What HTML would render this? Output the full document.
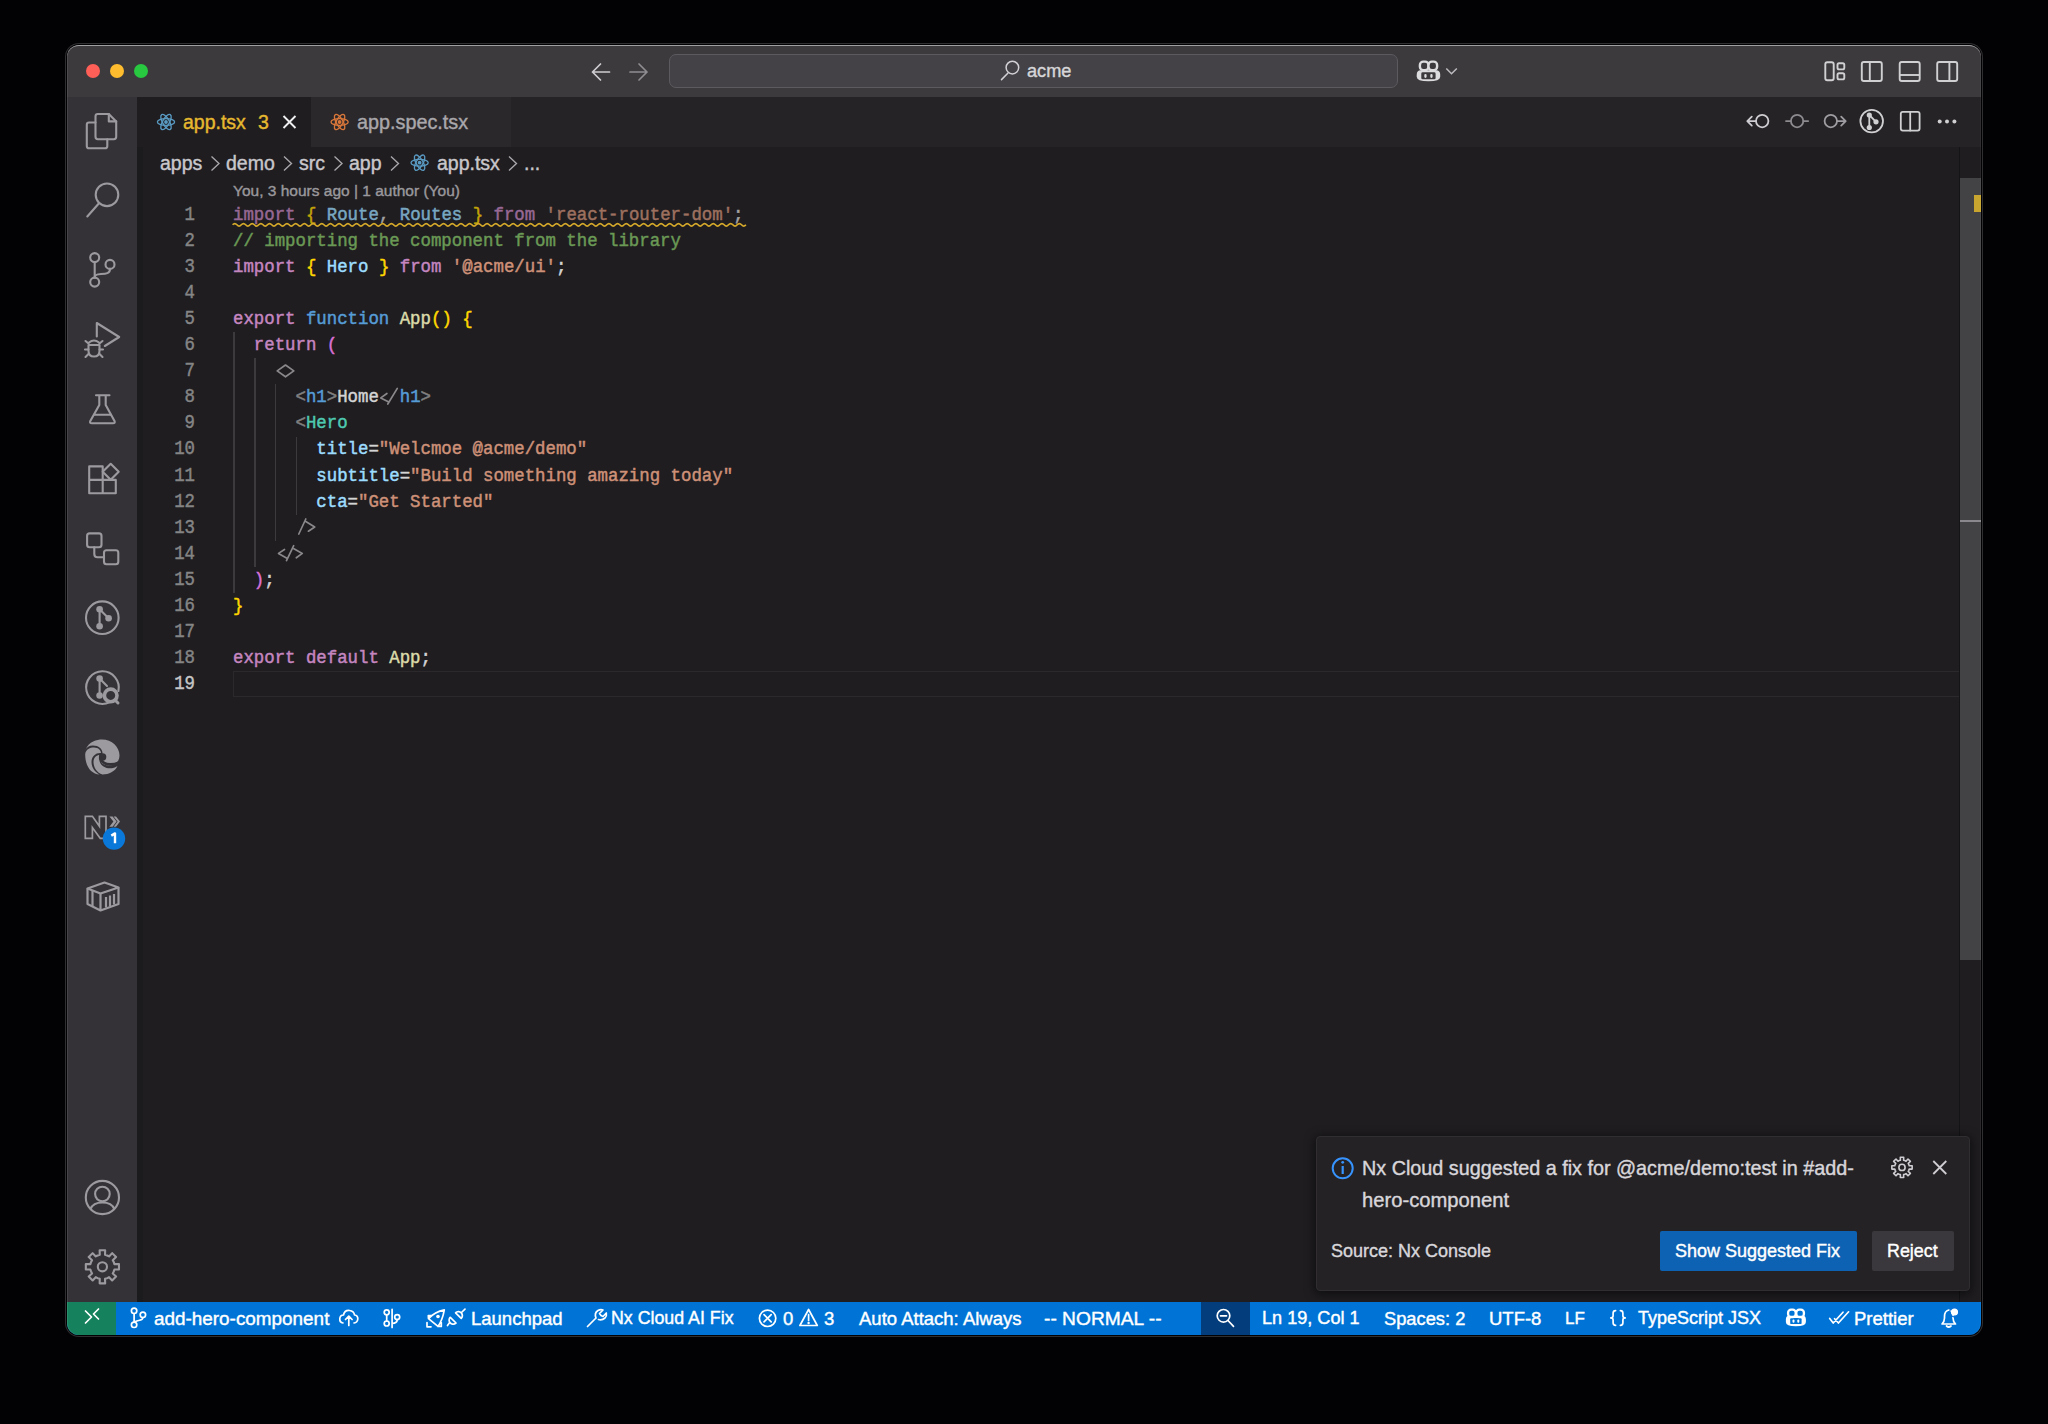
<!DOCTYPE html>
<html><head><meta charset="utf-8">
<style>
*{margin:0;padding:0;box-sizing:border-box}
html,body{width:2048px;height:1424px;background:#020104;overflow:hidden;font-family:"Liberation Sans",sans-serif;position:relative;-webkit-font-smoothing:antialiased}
.abs{position:absolute}
.t{position:absolute;white-space:pre;line-height:30px;height:30px;-webkit-text-stroke:0.4px currentColor}
#frame{position:absolute;left:67px;top:45px;width:1914px;height:1290px;border-radius:12px;background:#1f1d20;box-shadow:0 0 0 1px #020104,0 0 0 2px #2f2e31}
#title{position:absolute;left:67px;top:45px;width:1914px;height:52px;background:#3c3a3d;border-radius:12px 12px 0 0;border-top:1.5px solid #a09fa2}
.dot{position:absolute;width:14px;height:14px;border-radius:50%;top:64px}
#act{position:absolute;left:67px;top:97px;width:70px;height:1205px;background:#343236}
#tabs{position:absolute;left:137px;top:97px;width:1844px;height:50px;background:#252326}
#status{position:absolute;left:67px;top:1302px;width:1914px;height:33px;background:#0074d6;border-radius:0 0 12px 12px;overflow:hidden}
.ln{position:absolute;left:140px;width:55px;text-align:right;font-family:"Liberation Mono",monospace;font-size:17.38px;line-height:26.11px;height:26.11px;-webkit-text-stroke:0.4px currentColor;transform:translateY(0.8px) scaleY(1.14);transform-origin:0 18px}
.cl{position:absolute;left:233px;white-space:pre;font-family:"Liberation Mono",monospace;font-size:17.38px;line-height:26.11px;height:26.11px;color:#d4d4d4;-webkit-text-stroke:0.45px currentColor;transform:translateY(0.7px) scaleY(1.1);transform-origin:0 18px}
.dim{opacity:.72}
.st{position:absolute;top:1302px;line-height:33px;height:33px;color:#fff;font-size:18.5px;white-space:pre;-webkit-text-stroke:0.4px currentColor}
svg.ov{position:absolute;left:0;top:0;width:2048px;height:1424px}
</style></head><body>
<div id="frame"></div>
<div id="title"></div>
<div class="dot" style="left:86px;background:#ff5f57"></div>
<div class="dot" style="left:110px;background:#febc2e"></div>
<div class="dot" style="left:134px;background:#28c840"></div>
<!-- command center -->
<div class="abs" style="left:669px;top:54px;width:729px;height:34px;border-radius:7px;background:#444246;border:1px solid #5c5a5e"></div>
<div class="t" style="left:1027px;top:56px;color:#d6d5d8;font-size:18.2px">acme</div>

<div id="act"></div>
<div class="abs" style="left:137px;top:147px;width:6px;height:1155px;background:#1b1a1c"></div>
<div id="tabs"></div>
<div class="abs" style="left:137px;top:97px;width:174px;height:50px;background:#1f1d20"></div>
<div class="abs" style="left:311px;top:97px;width:200px;height:50px;background:#2a282b"></div>
<div class="t" style="left:183px;top:107px;color:#e5b82f;font-size:19.5px">app.tsx</div>
<div class="t" style="left:258px;top:107px;color:#e5b82f;font-size:19.5px">3</div>
<div class="t" style="left:357px;top:107px;color:#a9a7ab;font-size:19.8px">app.spec.tsx</div>

<!-- breadcrumbs -->
<div class="t" style="left:160px;top:148px;color:#c9c7cb;font-size:19.5px">apps</div>
<div class="t" style="left:226px;top:148px;color:#c9c7cb;font-size:19.5px">demo</div>
<div class="t" style="left:299px;top:148px;color:#c9c7cb;font-size:19.5px">src</div>
<div class="t" style="left:349px;top:148px;color:#c9c7cb;font-size:19.5px">app</div>
<div class="t" style="left:437px;top:148px;color:#c9c7cb;font-size:19.5px">app.tsx</div>
<div class="t" style="left:524px;top:148px;color:#c9c7cb;font-size:19.5px">...</div>
<div class="t" style="left:233px;top:176px;color:#9a989c;font-size:15.5px">You, 3 hours ago | 1 author (You)</div>

<div class="ln" style="top:201.50px;color:#858585">1</div>
<div class="cl dim" style="top:201.50px"><span style="color:#c586c0">import</span><span> </span><span style="color:#ffd700">{</span><span> </span><span style="color:#9cdcfe">Route</span><span>,</span><span> </span><span style="color:#9cdcfe">Routes</span><span> </span><span style="color:#ffd700">}</span><span> </span><span style="color:#c586c0">from</span><span> </span><span style="color:#ce9178">'react-router-dom'</span><span>;</span></div>
<div class="ln" style="top:227.61px;color:#858585">2</div>
<div class="cl" style="top:227.61px"><span style="color:#6a9955">// importing the component from the library</span></div>
<div class="ln" style="top:253.72px;color:#858585">3</div>
<div class="cl" style="top:253.72px"><span style="color:#c586c0">import</span><span> </span><span style="color:#ffd700">{</span><span> </span><span style="color:#9cdcfe">Hero</span><span> </span><span style="color:#ffd700">}</span><span> </span><span style="color:#c586c0">from</span><span> </span><span style="color:#ce9178">'@acme/ui'</span><span>;</span></div>
<div class="ln" style="top:279.83px;color:#858585">4</div>
<div class="ln" style="top:305.94px;color:#858585">5</div>
<div class="cl" style="top:305.94px"><span style="color:#c586c0">export</span><span> </span><span style="color:#569cd6">function</span><span> </span><span style="color:#dcdcaa">App</span><span style="color:#ffd700">()</span><span> </span><span style="color:#ffd700">{</span></div>
<div class="ln" style="top:332.05px;color:#858585">6</div>
<div class="cl" style="top:332.05px"><span>  </span><span style="color:#c586c0">return</span><span> </span><span style="color:#da70d6">(</span></div>
<div class="ln" style="top:358.16px;color:#858585">7</div>
<div class="ln" style="top:384.27px;color:#858585">8</div>
<div class="cl" style="top:384.27px"><span>      </span><span style="color:#808080">&lt;</span><span style="color:#569cd6">h1</span><span style="color:#808080">&gt;</span><span>Home</span><span>  </span><span style="color:#569cd6">h1</span><span style="color:#808080">&gt;</span></div>
<div class="ln" style="top:410.38px;color:#858585">9</div>
<div class="cl" style="top:410.38px"><span>      </span><span style="color:#808080">&lt;</span><span style="color:#4ec9b0">Hero</span></div>
<div class="ln" style="top:436.49px;color:#858585">10</div>
<div class="cl" style="top:436.49px"><span>        </span><span style="color:#9cdcfe">title</span><span>=</span><span style="color:#ce9178">"Welcmoe @acme/demo"</span></div>
<div class="ln" style="top:462.60px;color:#858585">11</div>
<div class="cl" style="top:462.60px"><span>        </span><span style="color:#9cdcfe">subtitle</span><span>=</span><span style="color:#ce9178">"Build something amazing today"</span></div>
<div class="ln" style="top:488.71px;color:#858585">12</div>
<div class="cl" style="top:488.71px"><span>        </span><span style="color:#9cdcfe">cta</span><span>=</span><span style="color:#ce9178">"Get Started"</span></div>
<div class="ln" style="top:514.82px;color:#858585">13</div>
<div class="ln" style="top:540.93px;color:#858585">14</div>
<div class="ln" style="top:567.04px;color:#858585">15</div>
<div class="cl" style="top:567.04px"><span>  </span><span style="color:#da70d6">)</span><span>;</span></div>
<div class="ln" style="top:593.15px;color:#858585">16</div>
<div class="cl" style="top:593.15px"><span style="color:#ffd700">}</span></div>
<div class="ln" style="top:619.26px;color:#858585">17</div>
<div class="ln" style="top:645.37px;color:#858585">18</div>
<div class="cl" style="top:645.37px"><span style="color:#c586c0">export</span><span> </span><span style="color:#c586c0">default</span><span> </span><span style="color:#dcdcaa">App</span><span>;</span></div>
<div class="ln" style="top:671.48px;color:#c6c6c6">19</div>
<div class="abs" style="left:233.0px;top:332.1px;width:1.8px;height:261.1px;background:#3c3a3d"></div>
<div class="abs" style="left:253.9px;top:358.2px;width:1.8px;height:208.9px;background:#3c3a3d"></div>
<div class="abs" style="left:274.7px;top:384.3px;width:1.8px;height:156.7px;background:#3c3a3d"></div>
<div class="abs" style="left:295.6px;top:436.5px;width:1.8px;height:78.3px;background:#3c3a3d"></div>

<!-- current line -->
<div class="abs" style="left:233px;top:671px;width:1727px;height:26px;border:1.5px solid #2b292c"></div>

<!-- scrollbar -->
<div class="abs" style="left:1960px;top:147px;width:21px;height:1155px;background:#1f1d20;box-shadow:-1px 0 0 #141315"></div>
<div class="abs" style="left:1960px;top:178px;width:21px;height:782px;background:#434245"></div>
<div class="abs" style="left:1974px;top:195px;width:7px;height:17px;background:#c7a52e"></div>
<div class="abs" style="left:1960px;top:520px;width:21px;height:2px;background:#8a888c"></div>

<!-- notification -->
<div class="abs" style="left:1316px;top:1136px;width:654px;height:155px;background:#242225;border:1px solid #302e31;border-radius:4px;box-shadow:0 2px 10px 2px rgba(0,0,0,.5)"></div>
<div class="t" style="left:1362px;top:1153px;color:#d8d6da;font-size:19.8px">Nx Cloud suggested a fix for @acme/demo:test in #add-</div>
<div class="t" style="left:1362px;top:1185px;color:#d8d6da;font-size:20.2px">hero-component</div>
<div class="t" style="left:1331px;top:1236px;color:#d8d6da;font-size:18px">Source: Nx Console</div>
<div class="abs" style="left:1660px;top:1231px;width:197px;height:40px;background:#0e62b3;border-radius:2px"></div>
<div class="t" style="left:1675px;top:1236px;color:#fff;font-size:18px">Show Suggested Fix</div>
<div class="abs" style="left:1872px;top:1231px;width:82px;height:40px;background:#3a383c;border-radius:2px"></div>
<div class="t" style="left:1887px;top:1236px;color:#fff;font-size:17.9px">Reject</div>

<!-- status bar -->
<div id="status">
  <div class="abs" style="left:0;top:0;width:49px;height:33px;background:#16825d"></div>
  <div class="abs" style="left:1134px;top:0;width:49px;height:33px;background:#033d7c"></div>
</div>
<div class="st" style="left:154px;font-size:18.9px">add-hero-component</div>
<div class="st" style="left:471px">Launchpad</div>
<div class="st" style="left:611px;font-size:17.8px">Nx Cloud AI Fix</div>
<div class="st" style="left:783px">0</div>
<div class="st" style="left:824px">3</div>
<div class="st" style="left:859px">Auto Attach: Always</div>
<div class="st" style="left:1044px;font-size:19.2px">-- NORMAL --</div>
<div class="st" style="left:1262px;font-size:18.1px">Ln 19, Col 1</div>
<div class="st" style="left:1384px;font-size:18.3px">Spaces: 2</div>
<div class="st" style="left:1489px">UTF-8</div>
<div class="st" style="left:1565px;font-size:17px">LF</div>
<div class="st" style="left:1638px;font-size:18px">TypeScript JSX</div>
<div class="st" style="left:1854px">Prettier</div>

<div class="abs" style="left:67px;top:45px;width:1914px;height:1290px;border-radius:12px;box-shadow:inset 1px 0 0 rgba(255,255,255,.09),inset -1px 0 0 rgba(255,255,255,.05)"></div>
<svg class="ov" viewBox="0 0 2048 1424">

<g fill="none" stroke="#9c9a9e" stroke-width="2.1" stroke-linecap="round" stroke-linejoin="round">
  <!-- explorer -->
  <path d="M95.5,122.5 H89 Q86.8,122.5 86.8,124.7 V146 Q86.8,148.3 89,148.3 H105 Q107.3,148.3 107.3,146 V139.3"/>
  <path d="M97.8,114 H108.8 L116.2,121.4 V136.8 Q116.2,139.2 113.8,139.2 H97.8 Q95.5,139.2 95.5,136.8 V116.3 Q95.5,114 97.8,114 Z"/>
  <path d="M108.8,114 V121.4 H116.2"/>
  <!-- search -->
  <circle cx="107" cy="194.8" r="11.3"/>
  <path d="M99,203.2 L87.3,216.5"/>
  <!-- scm -->
  <circle cx="94.7" cy="257.6" r="4.5"/>
  <circle cx="110" cy="264.4" r="4.5"/>
  <circle cx="94.7" cy="282.1" r="4.5"/>
  <path d="M94.7,262.1 V277.6"/>
  <path d="M110,268.9 C110,273.5 106,273.8 101,274 C97,274.2 94.7,275.5 94.7,277"/>
  <!-- debug -->
  <path d="M96.8,336.5 V323 L119.2,337 L104.8,346"/>
  <path d="M89,342.5 Q94,338.5 99,342.5 M88.5,345 H99.5 V351 Q99.5,356.5 94,356.5 Q88.5,356.5 88.5,351 Z" />
  <path d="M85.5,341 L88.5,343.5 M102.5,341 L99.5,343.5 M85,349.5 H88.5 M103,349.5 H99.5 M85.5,357 L89,353.5 M102.5,357 L99,353.5"/>
  <!-- testing flask -->
  <path d="M96,395.3 H109.5 M99.3,395.5 V405 L90.3,421 Q89.3,423.3 91.8,423.3 H113 Q115.5,423.3 114.5,421 L105.7,405 V395.5"/>
  <path d="M94,414.8 H111"/>
  <!-- extensions -->
  <path d="M89.2,466.4 H102.7 V493.3 H89.2 Z M89.2,479.9 H115.8 V493.3 H102.7"/>
  <path d="M110.7,463.8 L118.7,471.8 L110.7,479.8 L102.7,471.8 Z"/>
  <!-- nodes -->
  <rect x="87.1" y="533.4" width="14.4" height="13.9" rx="2.5"/>
  <rect x="104" y="550.3" width="14.3" height="13.9" rx="2.5"/>
  <path d="M94.3,547.3 V554 Q94.3,557.3 97.5,557.3 H104"/>
  <!-- gitlens -->
  <circle cx="102.3" cy="617.7" r="16.3"/>
  <path d="M99.6,609.3 V626.2 M99.6,609.3 L108.6,618.2"/>
  <!-- gitlens inspect -->
  <path d="M109.5,702.3 A16.3,16.3 0 1 1 118.4,691"/>
  <path d="M99.6,678.6 V695.5 M99.6,678.6 L107,686"/>
</g>
<g fill="#9c9a9e">
  <circle cx="99.6" cy="609.3" r="3.3"/><circle cx="108.6" cy="618.2" r="3.3"/><circle cx="99.6" cy="626.2" r="3.3"/>
  <circle cx="99.6" cy="678.6" r="3.3"/><circle cx="99.6" cy="695.5" r="3.3"/>
</g>
<circle cx="110.7" cy="695.4" r="6.3" fill="none" stroke="#9c9a9e" stroke-width="3.6"/>
<path d="M115,700 L118,703" stroke="#9c9a9e" stroke-width="3" stroke-linecap="round"/>
<!-- edge -->
<g fill="#9c9a9e">
  <path d="M85.5,750 C89,741 97,739.5 102,739.5 C112,739.5 119.5,747 119.5,755.5 C119.5,762 114.5,765.5 109,765.5 C104,765.5 100.5,763 100.5,759.5 C100.5,757 102.5,756 102.5,753 C102.5,749 98.5,745.5 93,745.5 C89,745.5 86.5,747.5 85.5,750 Z"/>
  <path d="M85.2,754 C86,749 90,747.5 94,747.5 C98.5,747.5 101,750.5 101,753 C96,752.5 91.5,756 91.5,762 C91.5,767.5 95,772 99.5,774.5 C91,774 85,766 85.2,754 Z"/>
  <path d="M93.5,762 C93.5,757.5 96.5,755 100,755 C98.5,758.5 99,763.5 103.5,766.5 C108,769.5 114,768.5 117.5,766 C115,771.5 109,774.5 102.5,774.5 C97,773 93.5,767.5 93.5,762 Z"/>
</g>
<circle cx="102.6" cy="757" r="3.7" fill="#343236"/>
<path d="M100.2,758.5 Q103,764.3 110,764.4 Q115,764.3 118.6,762.6" fill="none" stroke="#343236" stroke-width="2.6" stroke-linecap="round"/>
<!-- nx -->
<path d="M85.3,816.3 H92.4 L99.4,826.3 V816.3 H106 V838.4 H100.3 L92.4,827.5 V838.4 H85.3 Z" fill="none" stroke="#9c9a9e" stroke-width="1.7" stroke-linejoin="miter"/>
<path d="M109.4,816.5 H112.6 L116.6,821.6 L112.6,826.7 H109.4 L113.4,821.6 Z M113.6,816.5 H116 L120,821.6 L116,826.7 H113.6 L117.6,821.6 Z" fill="#9c9a9e"/>
<circle cx="114" cy="838.6" r="11.2" fill="#0a78d8"/>
<path d="M111.3,835.6 L115,833.4 V843.2" fill="none" stroke="#fff" stroke-width="2.4" stroke-linejoin="round"/>
<!-- docker container -->
<g fill="none" stroke="#9c9a9e" stroke-width="2.2" stroke-linejoin="round">
  <path d="M87.5,888.5 L104.5,882.5 L118.5,887.5 L100.5,893.5 Z"/>
  <path d="M87.5,888.5 V904 L100.5,910.5 L118.5,904 V887.5 M100.5,893.5 V910.5"/>
  <path d="M92.5,891 V906.5 M106,897 V907.5 M110,895.5 V906 M114,894 V904.5"/>
</g>
<!-- account -->
<g fill="none" stroke="#9c9a9e" stroke-width="2.1">
  <circle cx="102.4" cy="1197.5" r="16.6"/>
  <circle cx="102.4" cy="1194" r="7.3"/>
  <path d="M90.5,1209 C92.5,1204 97,1202.5 102.4,1202.5 C107.8,1202.5 112.3,1204 114.3,1209"/>
</g>
<!-- settings gear -->
<g fill="none" stroke="#9c9a9e" stroke-width="2.1" stroke-linejoin="round">
  <path d="M113.80,1262.18 L114.41,1264.16 L118.97,1264.04 L118.97,1269.56 L114.41,1269.44 L113.80,1271.42 L113.73,1271.60 L112.76,1273.43 L116.07,1276.57 L112.17,1280.47 L109.03,1277.16 L107.20,1278.13 L107.02,1278.20 L105.04,1278.81 L105.16,1283.37 L99.64,1283.37 L99.76,1278.81 L97.78,1278.20 L97.60,1278.13 L95.77,1277.16 L92.63,1280.47 L88.73,1276.57 L92.04,1273.43 L91.07,1271.60 L91.00,1271.42 L90.39,1269.44 L85.83,1269.56 L85.83,1264.04 L90.39,1264.16 L91.00,1262.18 L91.07,1262.00 L92.04,1260.17 L88.73,1257.03 L92.63,1253.13 L95.77,1256.44 L97.60,1255.47 L97.78,1255.40 L99.76,1254.79 L99.64,1250.23 L105.16,1250.23 L105.04,1254.79 L107.02,1255.40 L107.20,1255.47 L109.03,1256.44 L112.17,1253.13 L116.07,1257.03 L112.76,1260.17 L113.73,1262.00 Z"/>
  <circle cx="102.4" cy="1266.8" r="4.6"/>
</g>

<!-- title nav arrows -->
<g fill="none" stroke-width="1.7" stroke-linecap="round" stroke-linejoin="round">
  <path d="M609.5,72 H592.5 M600.5,64 L592.5,72 L600.5,80" stroke="#cfcdd1"/>
  <path d="M630,72 H647 M639,64 L647,72 L639,80" stroke="#8f8d91"/>
</g>
<!-- command center search -->
<g fill="none" stroke="#d2d0d4" stroke-width="1.5" stroke-linecap="round">
  <circle cx="1012.4" cy="67.6" r="6.3"/>
  <path d="M1007.8,73.2 L1001.5,79.6"/>
</g>
<!-- copilot -->
<path d="M1416.7,74.8 Q1416.7,70.2 1420.7,70.2 H1436.2 Q1440.2,70.2 1440.2,74.8 V76.8 Q1440.2,81.3 1428.45,81.3 Q1416.7,81.3 1416.7,76.8 Z" fill="#dcdbde"/>
<rect x="1421.3" y="72.3" width="14.3" height="7" rx="1.4" fill="#3c3a3d"/>
<g fill="#dcdbde"><rect x="1424.3" y="74" width="2.3" height="3.9" rx="1.1"/><rect x="1430.3" y="74" width="2.3" height="3.9" rx="1.1"/></g>
<g fill="#3c3a3d" stroke="#dcdbde" stroke-width="2.4"><rect x="1419.9" y="61.6" width="8.6" height="8.6" rx="3.4"/><rect x="1428.5" y="61.6" width="8.6" height="8.6" rx="3.4"/></g>
<path d="M1446.3,68.5 L1451.5,73.8 L1456.8,68.5" fill="none" stroke="#bdbbbf" stroke-width="1.5"/>
<!-- layout icons -->
<g fill="none" stroke="#d0cfd2" stroke-width="1.9">
  <rect x="1825.3" y="62.3" width="8.4" height="17.9" rx="2"/>
  <rect x="1837.5" y="63.2" width="6.8" height="6.2" rx="1.6"/>
  <rect x="1837.5" y="73.2" width="6.8" height="6.2" rx="1.6"/>
  <rect x="1861.8" y="62" width="20" height="19" rx="2"/><path d="M1869.8,62 V81"/>
  <rect x="1899.7" y="62" width="20" height="19" rx="2"/><path d="M1899.7,75 H1919.7"/>
  <rect x="1937.2" y="62" width="20" height="19" rx="2"/><path d="M1949.4,62 V81"/>
</g>
<!-- tabs -->
<g fill="none" stroke="#5a9bc3" stroke-width="1.35">
  <ellipse cx="166" cy="122" rx="8.6" ry="3.4"/>
  <ellipse cx="166" cy="122" rx="8.6" ry="3.4" transform="rotate(60 166 122)"/>
  <ellipse cx="166" cy="122" rx="8.6" ry="3.4" transform="rotate(120 166 122)"/>
</g><circle cx="166" cy="122" r="1.9" fill="#5a9bc3"/>
<path d="M283.5,116 L295.5,128 M295.5,116 L283.5,128" stroke="#f0eff1" stroke-width="1.9"/>
<g fill="none" stroke="#d9773a" stroke-width="1.35">
  <ellipse cx="339.6" cy="122" rx="8.6" ry="3.4"/>
  <ellipse cx="339.6" cy="122" rx="8.6" ry="3.4" transform="rotate(60 339.6 122)"/>
  <ellipse cx="339.6" cy="122" rx="8.6" ry="3.4" transform="rotate(120 339.6 122)"/>
</g><circle cx="339.6" cy="122" r="1.9" fill="#d9773a"/>
<!-- editor actions -->
<g fill="none" stroke-width="1.8" stroke-linecap="round" stroke-linejoin="round">
  <g stroke="#cfcdd1"><circle cx="1762.2" cy="121.1" r="6.2"/><path d="M1756,121.1 H1747.5 M1751.8,116.6 L1747.3,121.1 L1751.8,125.6"/></g>
  <g stroke="#8d8b8f"><circle cx="1797.1" cy="121.1" r="6.2"/><path d="M1786,121.1 H1790.9 M1803.3,121.1 H1808.2"/></g>
  <g stroke="#9f9da1"><circle cx="1830.8" cy="121.1" r="6.2"/><path d="M1837,121.1 H1845.5 M1841.2,116.6 L1845.7,121.1 L1841.2,125.6"/></g>
  <g stroke="#d0cfd2"><circle cx="1871.7" cy="121.1" r="11.3"/><path d="M1869.3,115 V127.5 M1869.3,115 L1876,121.8"/>
  <rect x="1900.8" y="111.8" width="18.8" height="18.8" rx="2"/><path d="M1910.2,111.8 V130.6"/></g>
</g>
<g fill="#d0cfd2">
  <circle cx="1869.3" cy="115" r="2.6"/><circle cx="1876" cy="121.8" r="2.6"/><circle cx="1869.3" cy="127.5" r="2.6"/>
  <circle cx="1939.7" cy="121.5" r="2"/><circle cx="1947" cy="121.5" r="2"/><circle cx="1954.4" cy="121.5" r="2"/>
</g>
<!-- breadcrumbs chevrons -->
<path d="M211.5,156.5 L219.0,163.5 L211.5,170.5" fill="none" stroke="#aaa8ac" stroke-width="1.35"/><path d="M284,156.5 L291.5,163.5 L284,170.5" fill="none" stroke="#aaa8ac" stroke-width="1.35"/><path d="M334.5,156.5 L342.0,163.5 L334.5,170.5" fill="none" stroke="#aaa8ac" stroke-width="1.35"/><path d="M391,156.5 L398.5,163.5 L391,170.5" fill="none" stroke="#aaa8ac" stroke-width="1.35"/><path d="M509,156.5 L516.5,163.5 L509,170.5" fill="none" stroke="#aaa8ac" stroke-width="1.35"/>
<g fill="none" stroke="#5a9bc3" stroke-width="1.35">
  <ellipse cx="419.6" cy="162.7" rx="8.6" ry="3.4"/>
  <ellipse cx="419.6" cy="162.7" rx="8.6" ry="3.4" transform="rotate(60 419.6 162.7)"/>
  <ellipse cx="419.6" cy="162.7" rx="8.6" ry="3.4" transform="rotate(120 419.6 162.7)"/>
</g><circle cx="419.6" cy="162.7" r="1.9" fill="#5a9bc3"/>
<!-- squiggle line 1 -->
<path d="M232.6,224.8 Q234.78,222.33 236.95,224.8 Q239.12,227.27 241.30,224.8 Q243.47,222.33 245.65,224.8 Q247.82,227.27 250.00,224.8 Q252.17,222.33 254.35,224.8 Q256.52,227.27 258.70,224.8 Q260.88,222.33 263.05,224.8 Q265.23,227.27 267.40,224.8 Q269.58,222.33 271.75,224.8 Q273.93,227.27 276.10,224.8 Q278.28,222.33 280.45,224.8 Q282.63,227.27 284.80,224.8 Q286.98,222.33 289.15,224.8 Q291.33,227.27 293.50,224.8 Q295.68,222.33 297.85,224.8 Q300.03,227.27 302.20,224.8 Q304.38,222.33 306.55,224.8 Q308.73,227.27 310.90,224.8 Q313.08,222.33 315.25,224.8 Q317.43,227.27 319.60,224.8 Q321.78,222.33 323.95,224.8 Q326.13,227.27 328.30,224.8 Q330.48,222.33 332.65,224.8 Q334.83,227.27 337.00,224.8 Q339.18,222.33 341.35,224.8 Q343.53,227.27 345.70,224.8 Q347.88,222.33 350.05,224.8 Q352.23,227.27 354.40,224.8 Q356.58,222.33 358.75,224.8 Q360.93,227.27 363.10,224.8 Q365.28,222.33 367.45,224.8 Q369.63,227.27 371.80,224.8 Q373.98,222.33 376.15,224.8 Q378.33,227.27 380.50,224.8 Q382.68,222.33 384.85,224.8 Q387.03,227.27 389.20,224.8 Q391.38,222.33 393.55,224.8 Q395.73,227.27 397.90,224.8 Q400.08,222.33 402.25,224.8 Q404.43,227.27 406.60,224.8 Q408.78,222.33 410.95,224.8 Q413.13,227.27 415.30,224.8 Q417.48,222.33 419.65,224.8 Q421.83,227.27 424.00,224.8 Q426.18,222.33 428.35,224.8 Q430.53,227.27 432.70,224.8 Q434.88,222.33 437.05,224.8 Q439.23,227.27 441.40,224.8 Q443.58,222.33 445.75,224.8 Q447.93,227.27 450.10,224.8 Q452.28,222.33 454.45,224.8 Q456.63,227.27 458.80,224.8 Q460.98,222.33 463.15,224.8 Q465.33,227.27 467.50,224.8 Q469.68,222.33 471.85,224.8 Q474.03,227.27 476.20,224.8 Q478.38,222.33 480.55,224.8 Q482.73,227.27 484.90,224.8 Q487.08,222.33 489.25,224.8 Q491.43,227.27 493.60,224.8 Q495.78,222.33 497.95,224.8 Q500.13,227.27 502.30,224.8 Q504.48,222.33 506.65,224.8 Q508.83,227.27 511.00,224.8 Q513.18,222.33 515.35,224.8 Q517.53,227.27 519.70,224.8 Q521.88,222.33 524.05,224.8 Q526.23,227.27 528.40,224.8 Q530.58,222.33 532.75,224.8 Q534.93,227.27 537.10,224.8 Q539.28,222.33 541.45,224.8 Q543.63,227.27 545.80,224.8 Q547.98,222.33 550.15,224.8 Q552.33,227.27 554.50,224.8 Q556.68,222.33 558.85,224.8 Q561.03,227.27 563.20,224.8 Q565.38,222.33 567.55,224.8 Q569.73,227.27 571.90,224.8 Q574.08,222.33 576.25,224.8 Q578.43,227.27 580.60,224.8 Q582.78,222.33 584.95,224.8 Q587.13,227.27 589.30,224.8 Q591.48,222.33 593.65,224.8 Q595.83,227.27 598.00,224.8 Q600.18,222.33 602.35,224.8 Q604.53,227.27 606.70,224.8 Q608.88,222.33 611.05,224.8 Q613.23,227.27 615.40,224.8 Q617.58,222.33 619.75,224.8 Q621.93,227.27 624.10,224.8 Q626.28,222.33 628.45,224.8 Q630.63,227.27 632.80,224.8 Q634.98,222.33 637.15,224.8 Q639.33,227.27 641.50,224.8 Q643.68,222.33 645.85,224.8 Q648.03,227.27 650.20,224.8 Q652.38,222.33 654.55,224.8 Q656.73,227.27 658.90,224.8 Q661.08,222.33 663.25,224.8 Q665.43,227.27 667.60,224.8 Q669.78,222.33 671.95,224.8 Q674.13,227.27 676.30,224.8 Q678.48,222.33 680.65,224.8 Q682.83,227.27 685.00,224.8 Q687.18,222.33 689.35,224.8 Q691.53,227.27 693.70,224.8 Q695.88,222.33 698.05,224.8 Q700.23,227.27 702.40,224.8 Q704.58,222.33 706.75,224.8 Q708.93,227.27 711.10,224.8 Q713.28,222.33 715.45,224.8 Q717.63,227.27 719.80,224.8 Q721.98,222.33 724.15,224.8 Q726.33,227.27 728.50,224.8 Q730.68,222.33 732.85,224.8 Q735.03,227.27 737.20,224.8 Q739.38,222.33 741.55,224.8 Q743.73,227.27 745.90,224.8" fill="none" stroke="#d4a82a" stroke-width="1.7"/>
<!-- notification icons -->
<circle cx="1342.7" cy="1168.3" r="10" fill="none" stroke="#3794ff" stroke-width="2"/>
<path d="M1342.7,1166 V1174" stroke="#3794ff" stroke-width="2.2"/><circle cx="1342.7" cy="1162.3" r="1.4" fill="#3794ff"/>
<g fill="none" stroke="#cfcdd1" stroke-width="1.6" stroke-linejoin="round">
  <path d="M1908.86,1164.62 L1909.23,1165.81 L1912.16,1165.71 L1912.16,1169.09 L1909.23,1168.99 L1908.86,1170.18 L1908.81,1170.29 L1908.23,1171.39 L1910.38,1173.39 L1907.99,1175.78 L1905.99,1173.63 L1904.89,1174.21 L1904.78,1174.26 L1903.59,1174.63 L1903.69,1177.56 L1900.31,1177.56 L1900.41,1174.63 L1899.22,1174.26 L1899.11,1174.21 L1898.01,1173.63 L1896.01,1175.78 L1893.62,1173.39 L1895.77,1171.39 L1895.19,1170.29 L1895.14,1170.18 L1894.77,1168.99 L1891.84,1169.09 L1891.84,1165.71 L1894.77,1165.81 L1895.14,1164.62 L1895.19,1164.51 L1895.77,1163.41 L1893.62,1161.41 L1896.01,1159.02 L1898.01,1161.17 L1899.11,1160.59 L1899.22,1160.54 L1900.41,1160.17 L1900.31,1157.24 L1903.69,1157.24 L1903.59,1160.17 L1904.78,1160.54 L1904.89,1160.59 L1905.99,1161.17 L1907.99,1159.02 L1910.38,1161.41 L1908.23,1163.41 L1908.81,1164.51 Z"/>
  <circle cx="1902" cy="1167.4" r="3.1"/>
</g>
<path d="M1933.3,1161 L1946.3,1174 M1946.3,1161 L1933.3,1174" stroke="#cfcdd1" stroke-width="1.8"/>
<!-- status bar icons -->
<g fill="none" stroke="#ffffff" stroke-width="1.7" stroke-linecap="round" stroke-linejoin="round">
  <path d="M85.5,1311 L91.5,1317 L85.5,1323 M98.5,1309 L93.5,1314 L98.5,1319"/>
  <circle cx="134.1" cy="1310.8" r="2.7"/><circle cx="134.1" cy="1324.8" r="2.7"/><circle cx="142.9" cy="1314.8" r="2.7"/>
  <path d="M134.1,1313.5 V1322.1 M142.9,1317.5 C142.9,1321 138,1320 135.5,1321.5"/>
  <path d="M343,1323 Q339.5,1322.5 339.8,1318.5 Q340.2,1315 343.5,1315 Q344.5,1310 349.5,1310.5 Q354,1311 354.5,1315 Q358,1315.5 357.8,1319 Q357.5,1322.5 354,1323"/>
  <path d="M348.8,1325.5 V1316.5 M345.5,1319.5 L348.8,1316.2 L352.1,1319.5"/>
  <circle cx="386.7" cy="1312.3" r="2.5"/><circle cx="386.7" cy="1323.5" r="2.5"/><circle cx="397.2" cy="1317.1" r="2.5"/>
  <path d="M386.7,1314.8 V1321 M392.1,1309.3 V1327.4 M397.2,1319.6 Q397.2,1323.5 392.1,1323.5"/>
  <path d="M428.5,1318.6 Q435,1311.5 444.3,1309.8 Q442.5,1320 438,1326.4 Z M428.5,1318.6 L428.3,1315.6 L432,1315.6 M438,1326.4 L441.3,1326.4 L441.3,1322.5 M427,1322.5 V1326.8 H431"/>
  <path d="M455.60,1312.80 L456.42,1312.17 L457.38,1311.78 L458.40,1311.64 L459.42,1311.78 L460.38,1312.17 L461.20,1312.80 L461.83,1313.62 L462.22,1314.58 L462.36,1315.60 L462.22,1316.62 L461.83,1317.58 L461.20,1318.40 Z M462,1312 L465,1309.2 M450.30,1317.30 L449.66,1318.13 L449.26,1319.11 L449.12,1320.15 L449.26,1321.19 L449.66,1322.17 L450.30,1323.00 L451.13,1323.64 L452.11,1324.04 L453.15,1324.18 L454.19,1324.04 L455.17,1323.64 L456.00,1323.00 Z M449.8,1322.3 L447.5,1325.5"/>
  <path d="M587.5,1326.5 L596,1318 M596,1318 Q594,1313 598,1310.5 Q600.5,1309 603,1310 L599.5,1313.5 L601,1315.5 L603,1316.5 L606.3,1313 Q607,1316 605,1318 Q602,1320.5 598.5,1319.5"/>
  <circle cx="767.6" cy="1318.3" r="8.2"/><path d="M764,1314.7 L771.2,1321.9 M771.2,1314.7 L764,1321.9"/>
  <path d="M808.6,1309.5 L817.3,1325.5 H799.9 Z M808.6,1314.5 V1320.5"/>
  <path d="M1615.6,1310.6 Q1613.1,1310.6 1613.1,1313.2 V1315.8 Q1613.1,1317.9 1610.8,1317.9 Q1613.1,1317.9 1613.1,1320 V1322.8 Q1613.1,1325.3 1615.6,1325.3 M1620.4,1310.6 Q1622.9,1310.6 1622.9,1313.2 V1315.8 Q1622.9,1317.9 1625.2,1317.9 Q1622.9,1317.9 1622.9,1320 V1322.8 Q1622.9,1325.3 1620.4,1325.3"/>
  <path d="M1829.7,1318.4 L1833.2,1323 L1843,1312.2 M1834.6,1318.7 L1838.4,1323 L1848.6,1311.8"/>
  <path d="M1942,1324 H1955.5 Q1953,1321.5 1953,1318 V1316.5 Q1953,1311 1948.7,1310 Q1944.5,1311 1944.5,1316.5 V1318 Q1944.5,1321.5 1942,1324 Z M1946.5,1326 Q1948.7,1328 1951,1326"/>
</g>
<g fill="#ffffff"><circle cx="438" cy="1316.5" r="1.8"/><circle cx="808.6" cy="1323" r="1.2"/><circle cx="1954.5" cy="1312" r="3.6"/></g>
<path d="M1954.5,1312 m-4.8,0 a4.8,4.8 0 1,0 9.6,0 a4.8,4.8 0 1,0 -9.6,0" fill="none" stroke="#0b6fd6" stroke-width="1.3"/>
<!-- zoom icon -->
<g fill="none" stroke="#ffffff" stroke-width="1.7" stroke-linecap="round">
  <circle cx="1223.5" cy="1315.8" r="6.3"/><path d="M1220.5,1315.8 H1226.5 M1228,1320.5 L1233.5,1326.3"/>
</g>
<!-- status copilot -->
<path d="M1785.9,1319.5 Q1785.9,1315.6 1789.5,1315.6 H1802.3 Q1805.9,1315.6 1805.9,1319.5 V1322 Q1805.9,1326.3 1795.9,1326.3 Q1785.9,1326.3 1785.9,1322 Z" fill="#fff"/>
<rect x="1790.2" y="1318" width="11.4" height="6.1" rx="1.2" fill="#0074d6"/>
<g fill="#fff"><rect x="1792.5" y="1319.4" width="2" height="3.3" rx="1"/><rect x="1797.3" y="1319.4" width="2" height="3.3" rx="1"/></g>
<g fill="#0074d6" stroke="#fff" stroke-width="2.3"><rect x="1788.1" y="1309.6" width="7.6" height="7.4" rx="3"/><rect x="1796.3" y="1309.6" width="7.6" height="7.4" rx="3"/></g>

<!-- fira ligatures -->
<g fill="none" stroke="#8a888b" stroke-width="1.7" stroke-linecap="round" stroke-linejoin="round">
  <path d="M277.2,370.9 L285.5,365 L293.8,370.9 L285.5,376.8 Z"/>
  <path d="M386.9,393.5 L380.8,397.9 L388.8,402.1 M387.8,404 L397.3,388.4"/>
  <path d="M298.8,534 L305.8,519 M305.8,521.5 L314.7,527 L308.4,531.2"/>
  <path d="M284.5,549.5 L278.5,553.4 L286.9,558.2 M286.5,560.6 L293.7,545.7 M293.9,548.8 L302.3,553.4 L296.3,557.8"/>
</g>

</svg>
</body></html>
